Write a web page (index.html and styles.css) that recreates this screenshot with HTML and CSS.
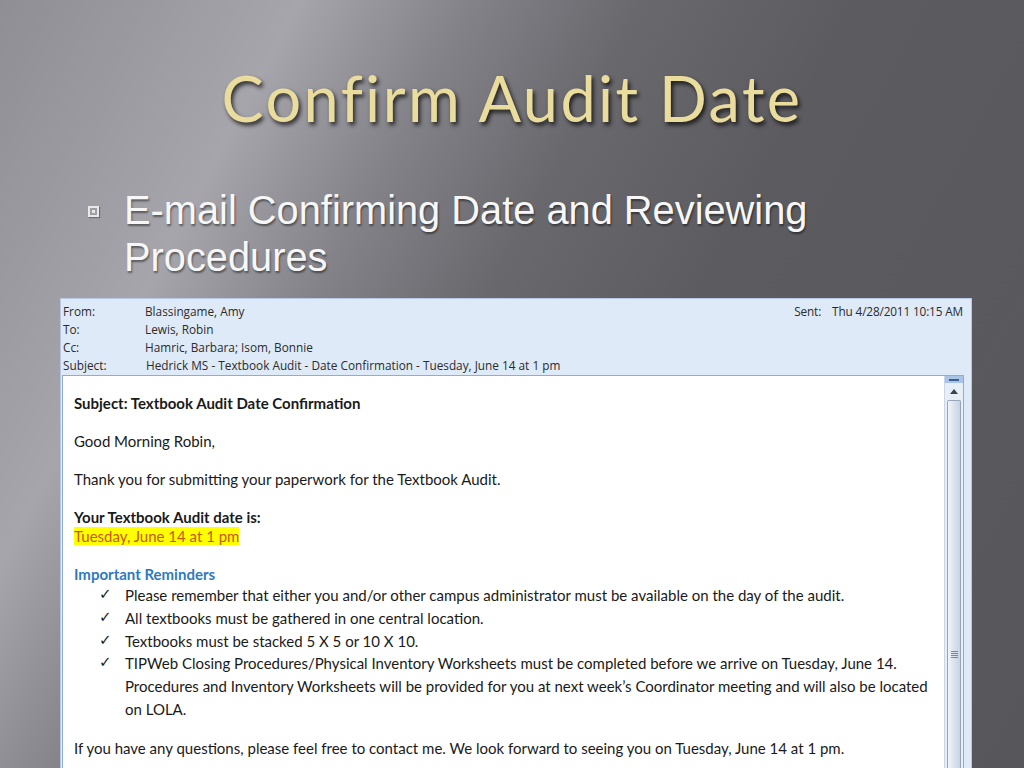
FILE: index.html
```html
<!DOCTYPE html>
<html lang="en">
<head>
    <meta charset="UTF-8">
    <title>Confirm Audit Date</title>
    <link rel="stylesheet" href="styles.css">
</head>
<body>
    <div class="slide">
        <h1 class="slide-title">Confirm Audit Date</h1>

        <ul class="points">
            <li><span class="point-mark"></span>E-mail Confirming Date and Reviewing Procedures</li>
        </ul>

        <div class="mail">
            <div class="mail-head">
                <div class="head-rows">
                    <div class="head-row"><span class="head-label">From:</span><span>Blassingame, Amy</span></div>
                    <div class="head-row"><span class="head-label">To:</span><span>Lewis, Robin</span></div>
                    <div class="head-row"><span class="head-label">Cc:</span><span>Hamric, Barbara; Isom, Bonnie</span></div>
                    <div class="head-row"><span class="head-label">Subject:</span><span class="head-subject">Hedrick MS - Textbook Audit - Date Confirmation - Tuesday, June 14 at 1 pm</span></div>
                </div>
                <div class="head-sent"><span class="head-label-sent">Sent:</span>Thu 4/28/2011 10:15 AM</div>
            </div>

            <div class="mail-view">
                <div class="mail-body">
                    <p><b>Subject: Textbook Audit Date Confirmation</b></p>
                    <p>Good Morning Robin,</p>
                    <p>Thank you for submitting your paperwork for the Textbook Audit.</p>
                    <p class="tight"><b>Your Textbook Audit date is:</b></p>
                    <p><span class="hilite">Tuesday, June 14 at 1 pm</span></p>
                    <p class="tight"><b class="reminders">Important Reminders</b></p>
                    <ul class="checks">
                        <li>Please remember that either you and/or other campus administrator must be available on the day of the audit.</li>
                        <li>All textbooks must be gathered in one central location.</li>
                        <li>Textbooks must be stacked 5 X 5 or 10 X 10.</li>
                        <li>TIPWeb Closing Procedures/Physical Inventory Worksheets must be completed before we arrive on Tuesday, June 14. Procedures and Inventory Worksheets will be provided for you at next week’s Coordinator meeting and will also be located on LOLA.</li>
                    </ul>
                    <p>If you have any questions, please feel free to contact me. We look forward to seeing you on Tuesday, June 14 at 1 pm.</p>
                </div>
                <div class="scrollbar">
                    <div class="split-box"></div>
                    <div class="arrow-up"></div>
                    <div class="thumb"><span class="grip"></span></div>
                </div>
            </div>
        </div>
    </div>
</body>
</html>
```
FILE: styles.css
```css
body {
    margin: 0;
    width: 1024px;
    height: 768px;
    overflow: hidden;
    background-color: #5a595e;
}
.slide {
    width: 1024px;
    height: 768px;
    overflow: hidden;
    background:
        linear-gradient(118deg, #8f8e94 0%, #9c9ba1 12%, #a6a5ab 21%, #838288 33%, #69686d 45%, #5c5b60 60%, #57565b 100%);
}
.slide-title {
    margin: 0;
    padding-top: 62px;
    height: 72px;
    font-family: Lato, "DejaVu Sans", sans-serif;
    font-weight: normal;
    font-size: 63px;
    line-height: 72px;
    letter-spacing: 2.4px;
    text-align: center;
    color: #e9dc9c;
    text-shadow: 2px 3px 4px rgba(0, 0, 0, 0.75);
}
.points {
    list-style: none;
    margin: 53px 0 0 0;
    padding: 0 0 0 124px;
    width: 720px;
    font-family: "Liberation Sans", Arial, sans-serif;
    font-size: 39.8px;
    line-height: 47px;
    color: #f7f7f7;
    text-shadow: 1px 2px 2px rgba(0, 0, 0, 0.45);
}
.points li {
    position: relative;
}
.point-mark {
    position: absolute;
    left: -36px;
    top: 19px;
    width: 7px;
    height: 7px;
    border: 2px solid #e8e8e8;
    box-shadow: 1px 1px 1px rgba(0, 0, 0, 0.3);
}
.point-mark::after {
    content: "";
    position: absolute;
    left: 2px;
    top: 2px;
    width: 3px;
    height: 3px;
    background-color: #e8e8e8;
}
.mail {
    margin: 17px 0 0 60px;
    width: 910px;
    height: 470px;
    border: 1px solid #b7c9e2;
    background-color: #dfeaf8;
    font-family: "Open Sans", "DejaVu Sans", sans-serif;
}
.mail-head {
    display: flex;
    justify-content: space-between;
    height: 76px;
    padding: 3px 8px 0 2px;
    box-sizing: border-box;
    font-size: 11.8px;
    color: #2b2b2b;
}
.head-row {
    display: flex;
    height: 18px;
    line-height: 18px;
}
.head-label {
    width: 82px;
}
.head-subject {
    padding-left: 1px;
}
.head-label-sent {
    margin-right: 11px;
}
.head-sent {
    line-height: 18px;
    letter-spacing: -0.15px;
}
.mail-view {
    display: flex;
    height: 392px;
    margin: 0 7px 0 1px;
    border: 1px solid #8eacd6;
    border-bottom: none;
    background-color: #fff;
}
.mail-body {
    flex: 1;
    padding: 18px 0 0 11px;
    font-family: Lato, "Open Sans", sans-serif;
    font-size: 15px;
    line-height: 19px;
    color: #1a1a1a;
}
.mail-body p {
    margin: 0 0 19px 0;
}
.mail-body p.tight {
    margin-bottom: 0;
}
.hilite {
    background-color: #ffff00;
    color: #c8590f;
}
.reminders {
    color: #2f79c0;
}
.checks {
    list-style: none;
    margin: 0 0 18px 0;
    padding: 0 0 0 51px;
    width: 810px;
    line-height: 22.8px;
}
.checks li {
    position: relative;
}
.checks li::before {
    content: "\2713";
    position: absolute;
    left: -26px;
    top: -1px;
    font-family: "DejaVu Sans", sans-serif;
    font-size: 15px;
    font-weight: bold;
    color: #1e1e1e;
}
.scrollbar {
    width: 18px;
    display: flex;
    flex-direction: column;
    align-items: center;
    background-color: #e8eef6;
    border-left: 1px solid #c9d6e8;
}
.split-box {
    width: 18px;
    height: 7px;
    background-color: #a9c4e6;
    position: relative;
}
.split-box::after {
    content: "";
    position: absolute;
    left: 4px;
    top: 3px;
    width: 10px;
    height: 2px;
    background-color: #3d5f8e;
}
.arrow-up {
    width: 18px;
    height: 17px;
    position: relative;
}
.arrow-up::after {
    content: "";
    position: absolute;
    left: 5px;
    top: 6px;
    border-left: 4px solid transparent;
    border-right: 4px solid transparent;
    border-bottom: 5px solid #3b4350;
}
.thumb {
    flex: 1;
    width: 14px;
    box-sizing: border-box;
    border: 1px solid #98a5b8;
    border-bottom: none;
    border-radius: 2px 2px 0 0;
    background: linear-gradient(90deg, #f2f5f9 0%, #dbe3ee 50%, #c8d3e2 100%);
    position: relative;
}
.grip {
    position: absolute;
    left: 3px;
    top: 250px;
    width: 7px;
    height: 7px;
    background: repeating-linear-gradient(180deg, #7d8796 0, #7d8796 1px, transparent 1px, transparent 2px);
}
```
